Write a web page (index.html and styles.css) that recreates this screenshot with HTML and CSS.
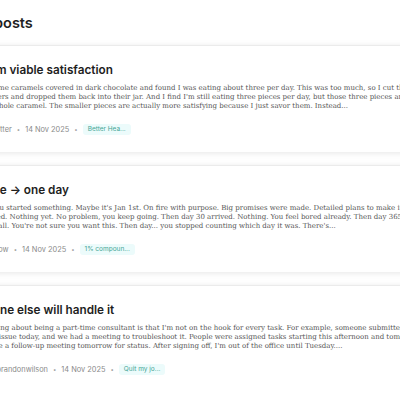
FILE: index.html
```html
<!DOCTYPE html>
<html lang="en">
<head>
<meta charset="utf-8">
<title>Your posts</title>
<link rel="stylesheet" href="styles.css">
</head>
<body>
<main class="page">
  <h1 class="page-title">Your posts</h1>
  <section class="post-list">
    <article class="post-card">
      <h2 class="post-title">Medium viable satisfaction</h2>
      <p class="post-excerpt">I bought some caramels covered in dark chocolate and found I was eating about three per day. This was too much, so I cut them<br>up in quarters and dropped them back into their jar. And I find I'm still eating three pieces per day, but those three pieces are<br>bites of a whole caramel. The smaller pieces are actually more satisfying because I just savor them. Instead...</p>
      <div class="post-meta">
        <span class="avatar"></span>
        <span class="author">jitter</span>
        <span class="dot">•</span>
        <span class="date">14 Nov 2025</span>
        <span class="dot">•</span>
        <span class="tag">Better Hea...</span>
      </div>
    </article>
    <article class="post-card">
      <h2 class="post-title">Day one → one day</h2>
      <p class="post-excerpt">Day one. You started something. Maybe it's Jan 1st. On fire with purpose. Big promises were made. Detailed plans to make it<br>Day 2 passed. Nothing yet. No problem, you keep going. Then day 30 arrived. Nothing. You feel bored already. Then day 365<br>Nothing at all. You're not sure you want this. Then day... you stopped counting which day it was. There's...</p>
      <div class="post-meta">
        <span class="avatar"></span>
        <span class="author">low</span>
        <span class="dot">•</span>
        <span class="date">14 Nov 2025</span>
        <span class="dot">•</span>
        <span class="tag">1% compoun...</span>
      </div>
    </article>
    <article class="post-card">
      <h2 class="post-title">Someone else will handle it</h2>
      <p class="post-excerpt">The best thing about being a part-time consultant is that I'm not on the hook for every task. For example, someone submitted<br>ted a large issue today, and we had a meeting to troubleshoot it. People were assigned tasks starting this afternoon and tomorrow<br>We will have a follow-up meeting tomorrow for status. After signing off, I'm out of the office until Tuesday....</p>
      <div class="post-meta">
        <span class="avatar"></span>
        <span class="author">brandonwilson</span>
        <span class="dot">•</span>
        <span class="date">14 Nov 2025</span>
        <span class="dot">•</span>
        <span class="tag">Quit my jo...</span>
      </div>
    </article>
  </section>
</main>
</body>
</html>
```

FILE: styles.css
```css
html, body {
  margin: 0;
  padding: 0;
  background: #ffffff;
  overflow: hidden;
}

.page {
  width: 540px;
  margin-left: -60px;
  font-family: Inter, "Noto Sans", sans-serif;
}

.page-title {
  margin: 13px 0 12px 18px;
  font-size: 14.5px;
  line-height: 20px;
  font-weight: 600;
  color: #1f1f1f;
}

.post-list {
  display: flex;
  flex-direction: column;
  gap: 13px;
}

.post-card {
  background: #ffffff;
  border-top: 1px solid #ebebeb;
  box-shadow: 0 1px 6px rgba(0, 0, 0, 0.1);
  padding: 16px 18px 18px 18px;
  height: 107px;
  box-sizing: border-box;
}

.post-title {
  margin: 0 0 0 2.5px;
  font-size: 11.75px;
  line-height: 16px;
  font-weight: 600;
  color: #1e1e1e;
  white-space: nowrap;
}

.post-excerpt {
  margin: 6px 0 0 0;
  font-family: "DejaVu Serif", "Liberation Serif", serif;
  font-size: 7px;
  line-height: 8.8px;
  color: #555555;
  white-space: nowrap;
}

.post-meta {
  display: flex;
  align-items: center;
  gap: 5px;
  margin-top: 13px;
  font-size: 7.4px;
  color: #8a8a8a;
  height: 12px;
  white-space: nowrap;
}

.avatar {
  width: 24px;
  height: 12px;
  margin-right: 9.5px;
}

.dot {
  font-size: 6px;
  color: #9a9a9a;
}

.tag {
  background: #ecfbfb;
  color: #45a595;
  border-radius: 3px;
  padding: 0 5px;
  font-size: 6.5px;
  line-height: 11px;
}
```
